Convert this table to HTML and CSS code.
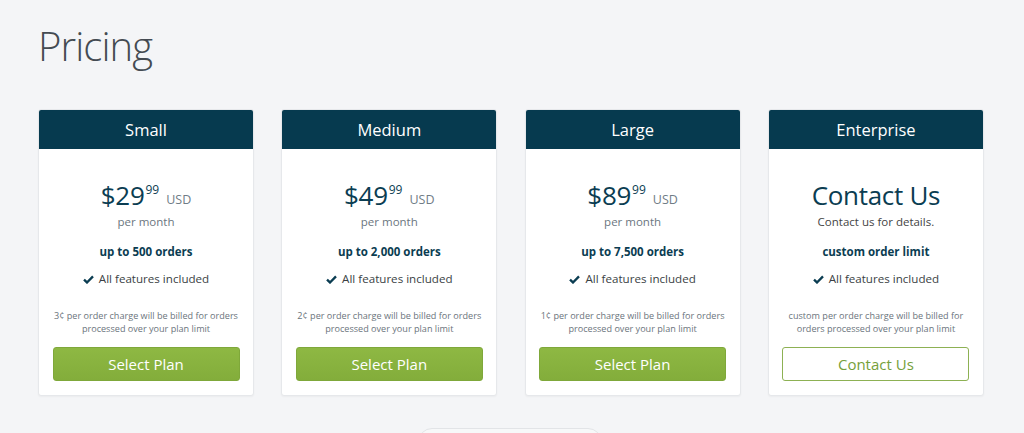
FILE: index.html
```html
<!DOCTYPE html>
<html>
<head>
<meta charset="utf-8">
<link rel="stylesheet" href="styles.css">
</head>
<body>
<main class="page">
  <h1 class="title">Pricing</h1>
  <section class="plans">
    <div class="card">
      <div class="card-head">Small</div>
      <div class="card-body">
        <div class="price"><span class="amount">$29</span><sup class="cents">99</sup><span class="cur">USD</span></div>
        <div class="sub">per month</div>
        <div class="limit">up to 500 orders</div>
        <div class="feat"><svg class="check" viewBox="0 0 12 10"><path d="M1 5.2 L4.3 8.3 L11 1.5" /></svg>All features included</div>
        <div class="note">3¢ per order charge will be billed for orders<br>processed over your plan limit</div>
        <button class="btn">Select Plan</button>
      </div>
    </div>
    <div class="card">
      <div class="card-head">Medium</div>
      <div class="card-body">
        <div class="price"><span class="amount">$49</span><sup class="cents">99</sup><span class="cur">USD</span></div>
        <div class="sub">per month</div>
        <div class="limit">up to 2,000 orders</div>
        <div class="feat"><svg class="check" viewBox="0 0 12 10"><path d="M1 5.2 L4.3 8.3 L11 1.5" /></svg>All features included</div>
        <div class="note">2¢ per order charge will be billed for orders<br>processed over your plan limit</div>
        <button class="btn">Select Plan</button>
      </div>
    </div>
    <div class="card">
      <div class="card-head">Large</div>
      <div class="card-body">
        <div class="price"><span class="amount">$89</span><sup class="cents">99</sup><span class="cur">USD</span></div>
        <div class="sub">per month</div>
        <div class="limit">up to 7,500 orders</div>
        <div class="feat"><svg class="check" viewBox="0 0 12 10"><path d="M1 5.2 L4.3 8.3 L11 1.5" /></svg>All features included</div>
        <div class="note">1¢ per order charge will be billed for orders<br>processed over your plan limit</div>
        <button class="btn">Select Plan</button>
      </div>
    </div>
    <div class="card">
      <div class="card-head">Enterprise</div>
      <div class="card-body">
        <div class="price"><span class="amount">Contact Us</span></div>
        <div class="sub sub-dark">Contact us for details.</div>
        <div class="limit">custom order limit</div>
        <div class="feat"><svg class="check" viewBox="0 0 12 10"><path d="M1 5.2 L4.3 8.3 L11 1.5" /></svg>All features included</div>
        <div class="note">custom per order charge will be billed for<br>orders processed over your plan limit</div>
        <button class="btn btn-outline">Contact Us</button>
      </div>
    </div>
  </section>
  <div class="more"></div>
</main>
</body>
</html>
```

FILE: styles.css
```css
* { box-sizing: border-box; }
html, body { margin: 0; padding: 0; }
body {
  background: #f4f5f7;
  font-family: "Open Sans", "Noto Sans", sans-serif;
  color: #333;
}
.page {
  padding: 17px 40px 0 38px;
  height: 433px;
  overflow: hidden;
}
.title {
  margin: 0;
  font-weight: 300;
  font-size: 40px;
  line-height: 58px;
  color: #444b52;
  letter-spacing: -0.9px;
}
.plans {
  margin-top: 34px;
  display: grid;
  grid-template-columns: repeat(4, 216px);
  column-gap: 27.3px;
}
.card {
  background: #fff;
  border: 1px solid #e6e8eb;
  border-radius: 3px;
  box-shadow: 0 1px 2px rgba(0,0,0,0.04);
  height: 287px;
  overflow: hidden;
}
.card-head {
  background: #063a4f;
  color: #fff;
  height: 40px;
  display: flex;
  align-items: center;
  justify-content: center;
  font-size: 16.5px;
  margin: -1px -1px 0;
}
.card-body {
  padding: 29px 8px 0;
  text-align: center;
  display: flex;
  flex-direction: column;
  align-items: center;
}
.price {
  color: #0b3d52;
  height: 34px;
  display: flex;
  align-items: flex-start;
  justify-content: center;
}
.amount {
  font-size: 26px;
  line-height: 34px;
  letter-spacing: -0.3px;
}
.cents {
  font-size: 12px;
  line-height: 12px;
  margin-top: 6px;
  margin-left: 1px;
  vertical-align: baseline;
}
.cur {
  font-size: 12.5px;
  color: #6f7c86;
  margin-left: 7px;
  line-height: 14px;
  margin-top: 15px;
}
.sub {
  font-size: 11.5px;
  color: #6b7680;
  line-height: 16px;
  margin-top: 2px;
}
.sub-dark { color: #444; }
.limit {
  font-size: 11.5px;
  font-weight: 700;
  color: #0b3d52;
  margin-top: 14px;
  line-height: 16px;
}
.feat {
  font-size: 11.6px;
  color: #3a3f44;
  margin-top: 11px;
  line-height: 16px;
  display: flex;
  align-items: center;
}
.check {
  width: 11px;
  height: 9px;
  margin-right: 5px;
  fill: none;
  stroke: #0b3d52;
  stroke-width: 2.6;
}
.note {
  font-size: 9.1px;
  color: #6b747c;
  line-height: 13px;
  margin-top: 22px;
  white-space: nowrap;
}
.btn {
  margin-top: 12px;
  width: 187px;
  height: 34px;
  border: 1px solid #7fa83a;
  border-radius: 3px;
  background: linear-gradient(#8eb843, #83ad3b);
  color: #fff;
  font-family: "Open Sans", "Noto Sans", sans-serif;
  font-size: 15px;
  font-weight: 400;
  padding: 0;
}
.btn-outline {
  background: #fff;
  color: #76a03a;
  border: 1px solid #8db153;
}
.more {
  margin: 32px auto 0;
  width: 184px;
  height: 40px;
  background: #f7f8f9;
  border: 1px solid #e2e4e7;
  border-radius: 14px;
  position: relative;
  left: -1px;
}
```
